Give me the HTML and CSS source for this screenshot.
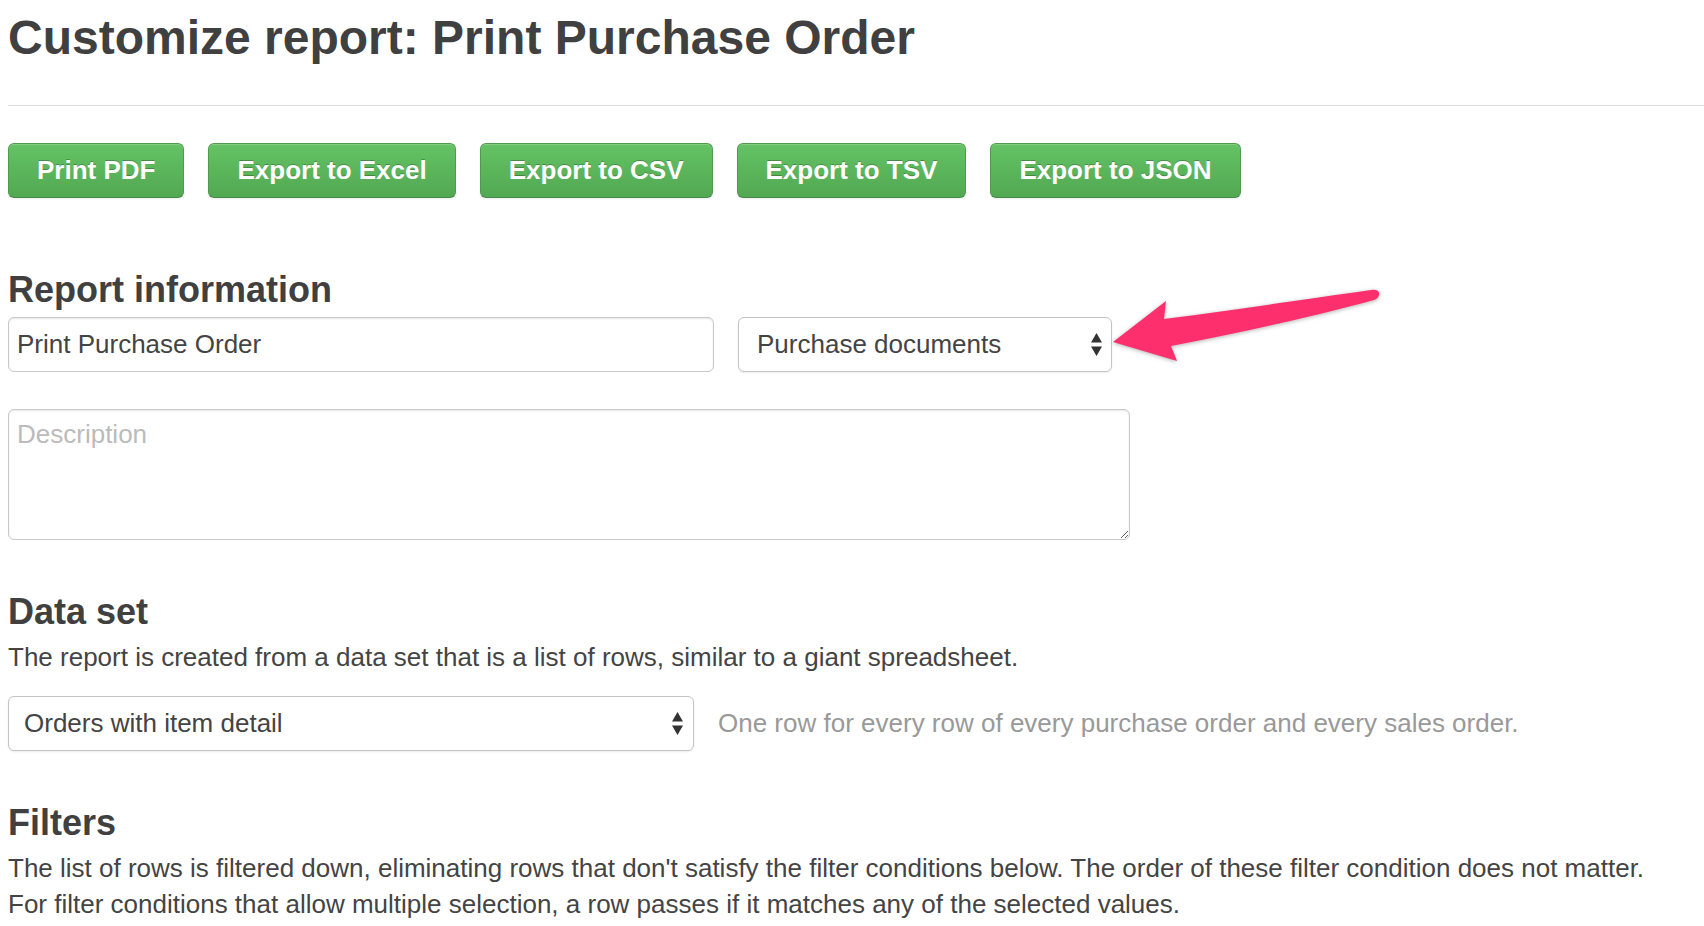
FILE: index.html
```html
<!DOCTYPE html>
<html lang="en">
<head>
<meta charset="utf-8">
<title>Customize report: Print Purchase Order</title>
<link rel="stylesheet" href="styles.css">
</head>
<body>
<div class="page">
  <h1 class="title">Customize report: Print Purchase Order</h1>
  <hr class="rule">
  <div class="actions">
    <button class="btn">Print PDF</button>
    <button class="btn">Export to Excel</button>
    <button class="btn">Export to CSV</button>
    <button class="btn">Export to TSV</button>
    <button class="btn">Export to JSON</button>
  </div>

  <section class="section section-first">
    <h3 class="section-title">Report information</h3>
    <div class="info-row">
      <input class="field field-name" type="text" value="Print Purchase Order">
      <div class="select select-category">
        <span class="select-value">Purchase documents</span>
        <svg class="select-arrows" width="11" height="23" viewBox="0 0 11 23"><path d="M5.5 0 L11 9.5 L0 9.5 Z M0 13.5 L11 13.5 L5.5 23 Z" fill="#333"/></svg>
      </div>
      <svg class="callout" width="300" height="95" viewBox="0 0 300 95">
        <path d="M13 60 L66 19 L64 37 C140 27 215 16 271 8 Q280 7 279 13 Q278 17 274 18 C215 34 140 51 71 64 L77 79 Z" fill="#fd2f6c"/>
      </svg>
    </div>
    <textarea class="field field-desc" placeholder="Description"></textarea>
  </section>

  <section class="section">
    <h3 class="section-title">Data set</h3>
    <p class="lead">The report is created from a data set that is a list of rows, similar to a giant spreadsheet.</p>
    <div class="dataset-row">
      <div class="select select-dataset">
        <span class="select-value">Orders with item detail</span>
        <svg class="select-arrows" width="11" height="23" viewBox="0 0 11 23"><path d="M5.5 0 L11 9.5 L0 9.5 Z M0 13.5 L11 13.5 L5.5 23 Z" fill="#333"/></svg>
      </div>
      <span class="hint">One row for every row of every purchase order and every sales order.</span>
    </div>
  </section>

  <section class="section">
    <h3 class="section-title">Filters</h3>
    <p class="lead">The list of rows is filtered down, eliminating rows that don't satisfy the filter conditions below. The order of these filter condition does not matter.<br>For filter conditions that allow multiple selection, a row passes if it matches any of the selected values.</p>
  </section>
</div>
</body>
</html>
```

FILE: styles.css
```css
* {
  box-sizing: border-box;
}

html, body {
  margin: 0;
  background: #fff;
}

body {
  font-family: "Liberation Sans", Arial, sans-serif;
  color: #444;
  overflow: hidden;
}

.page {
  padding: 0 0 0 8px;
}

.title {
  margin: 10px 0 0;
  font-size: 48px;
  line-height: 56px;
  font-weight: bold;
  color: #404040;
}

.rule {
  margin: 39px 0 0;
  border: 0;
  border-top: 1px solid #dedede;
  height: 0;
}

.actions {
  display: flex;
  gap: 24px;
  margin-top: 37px;
}

.btn {
  font-family: "Liberation Sans", Arial, sans-serif;
  font-weight: bold;
  font-size: 26px;
  line-height: 35px;
  color: #fff;
  padding: 9px 28px;
  border: 1px solid #4f9a4f;
  border-bottom-color: #468a46;
  border-radius: 6px;
  background: linear-gradient(#64c364, #52a852);
  text-shadow: 0 -1px 0 rgba(0, 0, 0, 0.25);
  box-shadow: inset 0 1px 0 rgba(255, 255, 255, 0.2), 0 1px 2px rgba(0, 0, 0, 0.08);
}

.section {
  margin-top: 52px;
}

.section-first {
  margin-top: 72px;
}

.section-title {
  margin: 0 0 7px;
  font-size: 36px;
  line-height: 40px;
  font-weight: bold;
  color: #404040;
}

.info-row {
  position: relative;
  display: flex;
  gap: 24px;
  margin-top: 5px;
}

.field {
  font-family: "Liberation Sans", Arial, sans-serif;
  font-size: 26px;
  color: #444;
  background: #fff;
  border: 1px solid #c8c8c8;
  border-radius: 6px;
  box-shadow: inset 0 1px 2px rgba(0, 0, 0, 0.1);
  outline: none;
}

.field::placeholder {
  color: #bbb;
}

.field-name {
  width: 706px;
  height: 55px;
  padding: 0 8px;
}

.select {
  display: flex;
  align-items: center;
  justify-content: space-between;
  height: 55px;
  border: 1px solid #c4c4c4;
  border-radius: 6px;
  background: #fff;
  box-shadow: 0 1px 2px rgba(0, 0, 0, 0.08);
  font-size: 26px;
  color: #444;
}

.select-category {
  width: 374px;
  padding: 0 9px 0 18px;
}

.select-dataset {
  width: 686px;
  padding: 0 10px 0 15px;
}

.select-arrows {
  display: block;
  flex: none;
}

.callout {
  position: absolute;
  left: 1092px;
  top: -35px;
  filter: drop-shadow(0 1px 2px rgba(0, 0, 0, 0.3));
}

.field-desc {
  display: block;
  width: 1122px;
  height: 131px;
  margin-top: 37px;
  padding: 6px 8px;
  line-height: 36px;
}

.lead {
  margin: 0;
  font-size: 26px;
  line-height: 36px;
}

.dataset-row {
  display: flex;
  align-items: center;
  gap: 24px;
  margin-top: 21px;
}

.hint {
  color: #999;
  font-size: 26px;
}
```
